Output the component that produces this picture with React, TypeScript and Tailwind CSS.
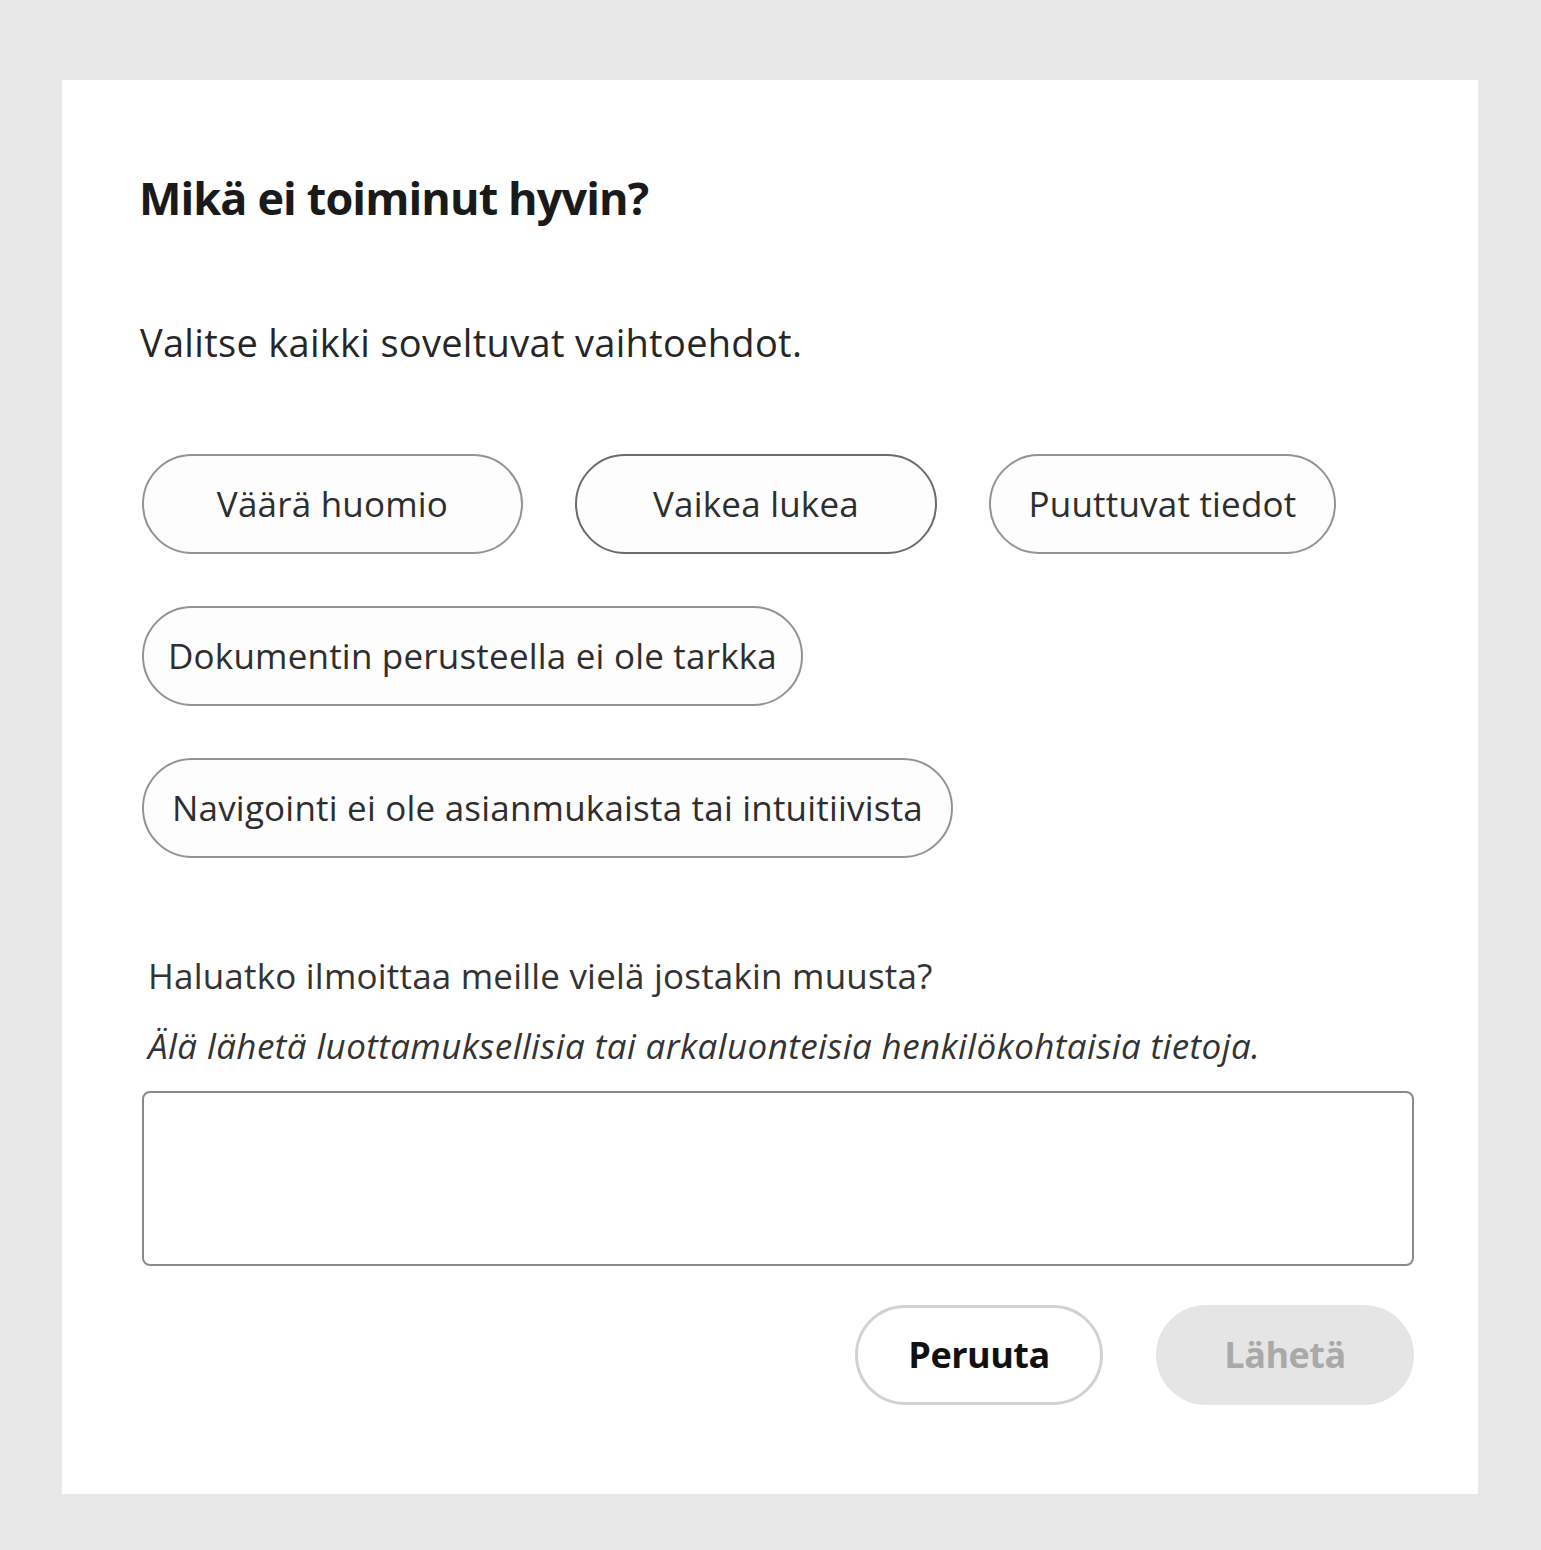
import React, { useState } from 'react';

const options = [
  { label: 'Väärä huomio', width: 'w-[381px]' },
  { label: 'Vaikea lukea', width: 'w-[362px]' },
  { label: 'Puuttuvat tiedot', width: 'w-[347px]' },
  { label: 'Dokumentin perusteella ei ole tarkka', width: 'w-[661px]' },
  { label: 'Navigointi ei ole asianmukaista tai intuitiivista', width: 'w-[811px]' },
];

const App: React.FC = () => {
  const [selected, setSelected] = useState<string[]>([]);
  const [comment, setComment] = useState('');

  const toggle = (label: string) => {
    setSelected((prev) => (prev.includes(label) ? prev.filter((l) => l !== label) : [...prev, label]));
  };

  const canSend = selected.length > 0 || comment.trim().length > 0;

  return (
    <div className="min-h-[1550px] bg-[#e8e8e8] pt-[80px] pl-[62px] font-['Open_Sans',sans-serif]">
      <div className="w-[1416px] h-[1414px] bg-white pt-[95px] pl-[80px] pr-[63px]">
        <h2 className="-ml-[3px] text-[45px] leading-[45px] font-bold text-[#1a1a1a] tracking-[-0.9px]">
          Mikä ei toiminut hyvin?
        </h2>

        <p className="-ml-[2px] mt-[103px] text-[38px] leading-[38px] text-[#262626] tracking-[0.3px]">
          Valitse kaikki soveltuvat vaihtoehdot.
        </p>

        <div className="mt-[93px] flex flex-wrap gap-[52px]">
          {options.map((o, i) => {
            const on = selected.includes(o.label);
            return (
              <button
                key={o.label}
                onClick={() => toggle(o.label)}
                className={`${o.width} h-[100px] rounded-full border-2 text-[35px] tracking-[0.2px] text-[#2e2e2e] ${
                  i === 1 ? 'border-[#6b6b6b]' : 'border-[#939393]'
                } ${on ? 'bg-[#e6e6e6]' : 'bg-[#fdfdfd]'}`}
              >
                {o.label}
              </button>
            );
          })}
        </div>

        <div className="mt-[98px] pl-[6px]">
          <p className="text-[35px] leading-[40px] text-[#333] tracking-[0.2px]">
            Haluatko ilmoittaa meille vielä jostakin muusta?
          </p>
          <p className="mt-[30px] text-[35px] leading-[40px] italic text-[#333] tracking-[0.4px]">
            Älä lähetä luottamuksellisia tai arkaluonteisia henkilökohtaisia tietoja.
          </p>
        </div>

        <textarea
          value={comment}
          onChange={(e) => setComment(e.target.value)}
          className="mt-[25px] block w-[1272px] h-[175px] rounded-[8px] border-2 border-[#8a8a8a] bg-white p-4 text-[30px] outline-none resize-none"
        />

        <div className="mt-[39px] flex justify-end gap-[53px] pr-[1px]">
          <button className="w-[248px] h-[100px] rounded-full border-[3px] border-[#d2d2d2] bg-white text-[36px] font-bold text-[#111] tracking-[-0.5px]">
            Peruuta
          </button>
          <button
            disabled={!canSend}
            className="w-[258px] h-[100px] rounded-full bg-[#e5e5e5] text-[36px] font-bold text-[#a9a9a9] tracking-[-0.5px]"
          >
            Lähetä
          </button>
        </div>
      </div>
    </div>
  );
};

export default App;
